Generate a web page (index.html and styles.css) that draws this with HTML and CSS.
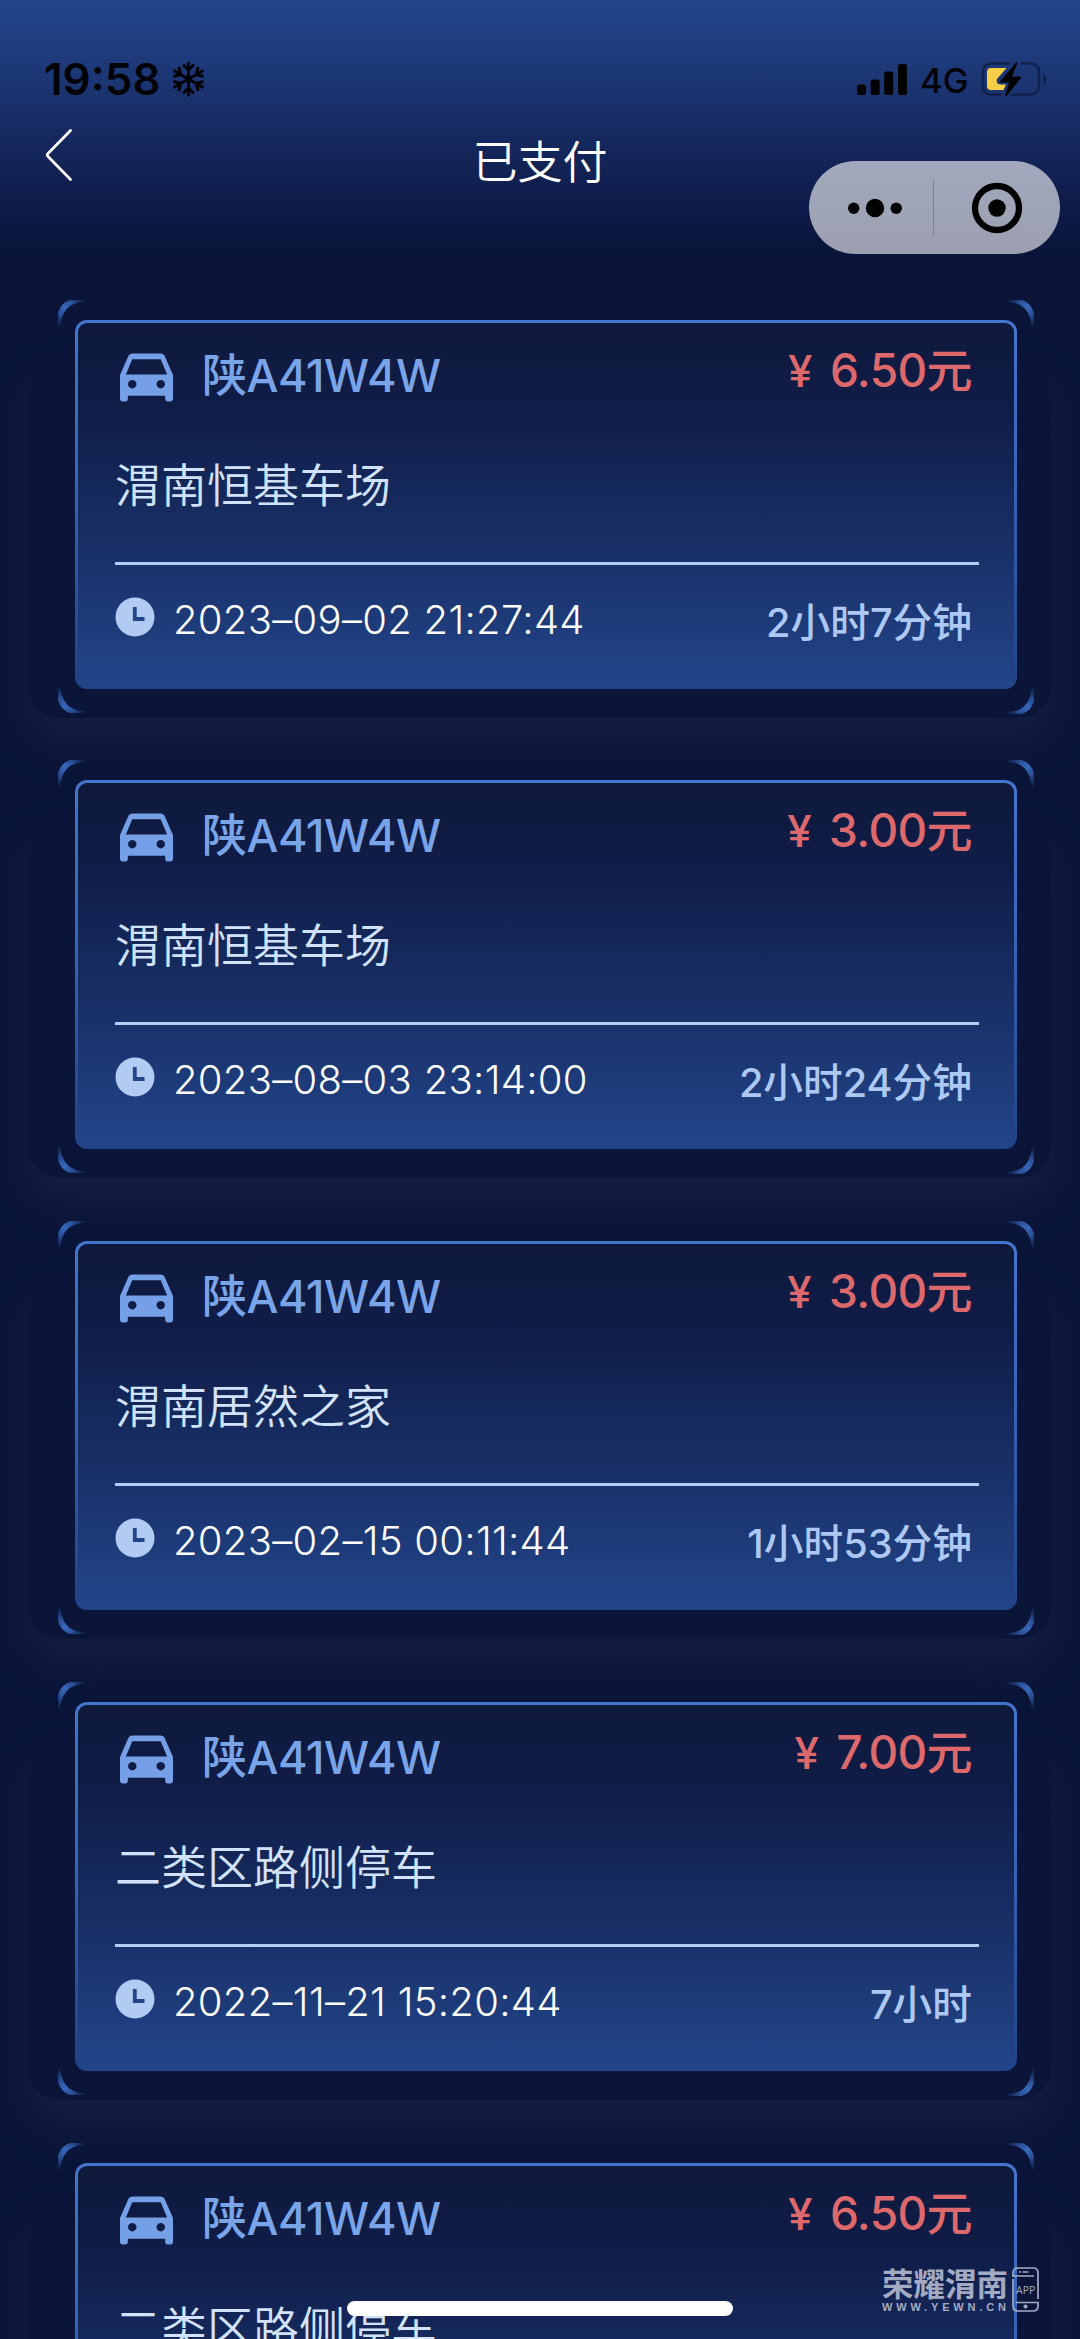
FILE: index.html
```html
<!DOCTYPE html>
<html lang="zh-CN">
<head>
<meta charset="utf-8">
<title>已支付</title>
<link rel="stylesheet" href="styles.css">
</head>
<body>
<svg class="defs" width="0" height="0" aria-hidden="true">
  <defs>
    <linearGradient id="arc-fade" gradientUnits="userSpaceOnUse" x1="0" y1="27" x2="27" y2="0">
      <stop offset="0" stop-color="#3c6fc8" stop-opacity="0"/>
      <stop offset=".3" stop-color="#3767bb" stop-opacity=".75"/>
      <stop offset=".5" stop-color="#3767bb"/>
      <stop offset=".7" stop-color="#3767bb" stop-opacity=".75"/>
      <stop offset="1" stop-color="#3c6fc8" stop-opacity="0"/>
    </linearGradient>
    <symbol id="arc" viewBox="0 0 27 27">
      <path d="M0 27V13C2 6 7 1 13 0H27V2C13 2 4 9 2 27Z" fill="url(#arc-fade)"/>
    </symbol>
    <symbol id="car" viewBox="0 0 54 49">
      <path fill-rule="evenodd" fill="#75a0e8" d="M13 0H41Q44.500 0 45.700 3L54 22V46Q54 49 51 49H48.500Q46 49 46 46V43H8V46Q8 49 5.500 49H3Q0 49 0 46V22L8.300 3Q9.500 0 13 0ZM12.500 6 6 21.500H48L41.500 6ZM12.500 27a4.300 4.300 0 1 0 .01 0ZM41.500 27a4.300 4.300 0 1 0 .01 0Z"/>
    </symbol>
    <symbol id="clock" viewBox="0 0 40 40">
      <circle cx="20" cy="20" r="19.500" fill="#b1cbf3"/>
      <path d="M19.800 10V22H29.500" fill="none" stroke="#234588" stroke-width="3.800"/>
    </symbol>
  </defs>
</svg>
<div class="app">
  <header class="top">
    <div class="status">
      <span class="time">19:58</span>
      <svg class="snow" viewBox="0 0 32 36">
        <g fill="none" stroke="#020308" stroke-width="3.100" stroke-linecap="round" stroke-linejoin="round">
          <g id="arm"><path d="M16 18V2M11.500 4.500 16 9 20.500 4.500"/></g>
          <use href="#arm" transform="rotate(60 16 18)"/>
          <use href="#arm" transform="rotate(120 16 18)"/>
          <use href="#arm" transform="rotate(180 16 18)"/>
          <use href="#arm" transform="rotate(240 16 18)"/>
          <use href="#arm" transform="rotate(300 16 18)"/>
        </g>
      </svg>
      <svg class="signal" viewBox="0 0 50 31">
        <rect x="0" y="20.500" width="9" height="10.500" rx="2.500"/>
        <rect x="13.700" y="15.500" width="9" height="15.500" rx="2.500"/>
        <rect x="27.200" y="7.500" width="9" height="23.500" rx="2.500"/>
        <rect x="41" y="0" width="9" height="31" rx="2.500"/>
      </svg>
      <span class="net">4G</span>
      <svg class="battery" viewBox="0 0 68 36">
        <path d="M29 2.500H11Q2 2.500 2 11V25Q2 33.500 11 33.500H20M40 2.500H49Q58 2.500 58 11V25Q58 33.500 49 33.500H30" fill="none" stroke="#11224e" stroke-width="2.600"/>
        <path d="M62 12.500Q65.500 14 65.500 18T62 23.500Z" fill="#11224e"/>
        <path d="M10 7H25.500L16 18Q14.500 22.500 19 23.500H25L22.500 29H10Q6 29 6 25V11Q6 7 10 7Z" fill="#f7ce46"/>
        <path d="M35.500 1 19 20.500Q18.500 21.500 20 21.500H28L24 34.500Q24 36 25.500 35L40 17Q41 15.500 39 15.500H31L36.500 2Q36.500 .5 35.500 1Z" fill="#000"/>
      </svg>
    </div>
    <div class="nav">
      <svg class="back" viewBox="0 0 28 52"><path d="M25.500 1.500 3 24.500Q1.500 26 3 27.500L25.500 50.500" fill="none" stroke="#fff" stroke-width="2.700" stroke-linecap="round"/></svg>
      <h1 class="title">已支付</h1>
      <div class="capsule">
        <svg class="dots" viewBox="0 0 54 20"><circle cx="5.700" cy="10.200" r="5.700"/><circle cx="27" cy="10" r="9.200"/><circle cx="48.200" cy="10.200" r="5.700"/></svg>
        <span class="split"></span>
        <svg class="ring" viewBox="0 0 52 52"><circle cx="26" cy="26" r="22" fill="none" stroke="#000" stroke-width="6.300"/><circle cx="26" cy="26" r="8.700"/></svg>
      </div>
    </div>
  </header>

  <main class="list">
    <article class="card">
      <svg class="arc tl"><use href="#arc"/></svg><svg class="arc tr"><use href="#arc"/></svg><svg class="arc bl"><use href="#arc"/></svg><svg class="arc br"><use href="#arc"/></svg>
      <div class="head"><svg class="car"><use href="#car"/></svg><span class="plate">陕A41W4W</span><span class="price"><span class="yen">¥</span>6.50元</span></div>
      <div class="place">渭南恒基车场</div>
      <div class="foot"><svg class="clock"><use href="#clock"/></svg><span class="date">2023–09–02 21:27:44</span><span class="dur">2小时7分钟</span></div>
    </article>
    <article class="card">
      <svg class="arc tl"><use href="#arc"/></svg><svg class="arc tr"><use href="#arc"/></svg><svg class="arc bl"><use href="#arc"/></svg><svg class="arc br"><use href="#arc"/></svg>
      <div class="head"><svg class="car"><use href="#car"/></svg><span class="plate">陕A41W4W</span><span class="price"><span class="yen">¥</span>3.00元</span></div>
      <div class="place">渭南恒基车场</div>
      <div class="foot"><svg class="clock"><use href="#clock"/></svg><span class="date">2023–08–03 23:14:00</span><span class="dur">2小时24分钟</span></div>
    </article>
    <article class="card">
      <svg class="arc tl"><use href="#arc"/></svg><svg class="arc tr"><use href="#arc"/></svg><svg class="arc bl"><use href="#arc"/></svg><svg class="arc br"><use href="#arc"/></svg>
      <div class="head"><svg class="car"><use href="#car"/></svg><span class="plate">陕A41W4W</span><span class="price"><span class="yen">¥</span>3.00元</span></div>
      <div class="place">渭南居然之家</div>
      <div class="foot"><svg class="clock"><use href="#clock"/></svg><span class="date">2023–02–15 00:11:44</span><span class="dur">1小时53分钟</span></div>
    </article>
    <article class="card">
      <svg class="arc tl"><use href="#arc"/></svg><svg class="arc tr"><use href="#arc"/></svg><svg class="arc bl"><use href="#arc"/></svg><svg class="arc br"><use href="#arc"/></svg>
      <div class="head"><svg class="car"><use href="#car"/></svg><span class="plate">陕A41W4W</span><span class="price"><span class="yen">¥</span>7.00元</span></div>
      <div class="place">二类区路侧停车</div>
      <div class="foot"><svg class="clock"><use href="#clock"/></svg><span class="date">2022–11–21 15:20:44</span><span class="dur">7小时</span></div>
    </article>
    <article class="card">
      <svg class="arc tl"><use href="#arc"/></svg><svg class="arc tr"><use href="#arc"/></svg>
      <div class="head"><svg class="car"><use href="#car"/></svg><span class="plate">陕A41W4W</span><span class="price"><span class="yen">¥</span>6.50元</span></div>
      <div class="place">二类区路侧停车</div>
    </article>
  </main>

  <div class="home-bar"></div>
  <div class="mark">
    <div class="mark-text"><span class="mark-name">荣耀渭南</span><span class="mark-url">WWW.YEWN.CN</span></div>
    <svg class="phone" viewBox="0 0 27 45">
      <g fill="none" stroke="#a3abc3" stroke-width="1.700"><path d="M1 10V6Q1 1 6 1H21Q26 1 26 6V32M1 12V39Q1 44 6 44H21Q26 44 26 39V35.500H4M1 9H22"/></g>
      <path d="M7 4.200h2v1.600H7zM10.500 4.200h6v1.600h-6zM13.500 37 16 39.500 13.500 42 11 39.500Z" fill="#a3abc3"/>
      <text x="13.700" y="26.500" text-anchor="middle" class="phone-app">APP</text>
    </svg>
  </div>
</div>
</body>
</html>
```
FILE: styles.css
```css
* { box-sizing: border-box; }
body {
  margin: 0;
  background: #0a1436;
  font-family: Inter, "Noto Sans CJK SC", sans-serif;
}
svg { display: block; flex: none; }
.defs { position: absolute; }
.app {
  position: relative;
  width: 1080px;
  height: 2339px;
  overflow: hidden;
  background: linear-gradient(#22458a 0, #1c3674 80px, #14265a 150px, #0e1a48 210px, #0a1539 255px);
}
.top { height: 319.500px; }

/* status bar */
.status {
  display: flex;
  align-items: center;
  height: 118px;
  padding: 40px 31px 0 44px;
}
.time {
  width: 117px;
  font-size: 44px;
  font-weight: 600;
  line-height: 60px;
  color: #020308;
  white-space: nowrap;
}
.snow { width: 33px; height: 36px; margin-left: 11px; }
.signal { width: 50px; height: 31px; margin-left: auto; }
.net {
  width: 48px;
  margin: 3px 13px 0 13px;
  font-size: 34.500px;
  font-weight: 500;
  line-height: 40px;
  color: #020308;
}
.battery { width: 68px; height: 36px; }

/* navigation */
.nav {
  display: grid;
  grid-template-columns: minmax(0, 1fr) auto minmax(0, 1fr);
  align-items: start;
  padding: 11px 20px 0 45px;
}
.back { width: 28px; height: 52px; }
.title {
  margin: 4px 25px 0 0;
  font-size: 45px;
  font-weight: 350;
  line-height: 60px;
  color: #fff;
}
.capsule {
  display: flex;
  align-items: center;
  justify-self: end;
  width: 251px;
  height: 93px;
  margin-top: 32px;
  padding-left: 39px;
  border-radius: 47px;
  background: linear-gradient(#a2a9be, #9c9fb0);
}
.dots { width: 54px; height: 20px; }
.split { width: 1px; height: 56px; margin: 0 37px 0 31px; background: #7b8096; }
.ring { width: 52px; height: 52px; }

/* records */
.list {
  display: flex;
  flex-direction: column;
  gap: 91.800px;
  padding: 0 63px 0 75px;
}
.card {
  position: relative;
  z-index: 0;
  flex: none;
  height: 369px;
  padding: 26px 38px 0 40px;
}
.card::before {
  content: "";
  position: absolute;
  z-index: -1;
  inset: 41px -34px -29px -47px;
  border-radius: 32px;
  box-shadow: 0 22px 44px 2px #161f40;
}
.card::after {
  content: "";
  position: absolute;
  z-index: -1;
  inset: 0;
  border: 3px solid transparent;
  border-radius: 12px;
  background:
    linear-gradient(#0e193b, #101d49 25%, #15295c 48%, #1b3570 72%, #224589) padding-box,
    linear-gradient(#4475cc, #3561b4 50%, #224589 95%) border-box;
}
.arc { position: absolute; width: 27px; height: 27px; }
.tl { left: -17px; top: -20px; }
.tr { right: -17px; top: -20px; transform: scaleX(-1); }
.bl { left: -17px; bottom: -24px; transform: scaleY(-1); }
.br { right: -17px; bottom: -25px; transform: scale(-1); }
.head { display: flex; align-items: flex-start; height: 60px; padding: 0 7px 0 5px; }
.car { width: 53px; height: 49px; margin-top: 7px; }
.plate {
  margin-left: 29px;
  font-size: 45px;
  font-weight: 500;
  line-height: 60px;
  letter-spacing: -.5px;
  color: #7aa4e8;
}
.price {
  margin: -6px 0 0 auto;
  font-size: 46px;
  font-weight: 500;
  line-height: 60px;
  letter-spacing: -.6px;
  color: #dd696d;
}
.yen { margin-right: 18px; font-size: 44px; }
.place {
  height: 108.500px;
  padding: 49px 0 0;
  margin-bottom: 47.500px;
  font-size: 46px;
  font-weight: 350;
  line-height: 60px;
  color: #d3e2fb;
}
.foot {
  display: flex;
  align-items: flex-start;
  padding: 25px 7px 0 0;
  border-top: 3px solid #b4cdf5;
}
.clock { width: 40px; height: 40px; margin-top: 7px; }
.date {
  margin-left: 18px;
  font-size: 40px;
  font-weight: 350;
  line-height: 60px;
  letter-spacing: .3px;
  color: #fff;
  white-space: nowrap;
}
.dur {
  margin: 3px 0 0 auto;
  font-size: 39.700px;
  font-weight: 500;
  line-height: 60px;
  color: #adc8f3;
}

/* overlays */
.home-bar {
  position: absolute;
  left: 347px;
  top: 2301px;
  width: 386px;
  height: 15px;
  border-radius: 8px;
  background: #fff;
}
.mark {
  position: absolute;
  left: 882px;
  top: 2267px;
  display: flex;
  gap: 4px;
  color: #a3abc3;
}
.mark-text { width: 126px; }
.mark-name {
  display: block;
  font-family: "Noto Sans CJK SC", sans-serif;
  font-size: 31.500px;
  font-weight: 700;
  line-height: 31px;
  white-space: nowrap;
}
.mark-url {
  display: block;
  margin-top: 4px;
  font-family: "Liberation Sans", sans-serif;
  font-size: 11px;
  font-weight: 700;
  line-height: 11px;
  letter-spacing: 3.850px;
  white-space: nowrap;
}
.phone { width: 27px; height: 45px; }
.phone-app { font: 10.500px "Open Sans", sans-serif; fill: #a3abc3; }
```
